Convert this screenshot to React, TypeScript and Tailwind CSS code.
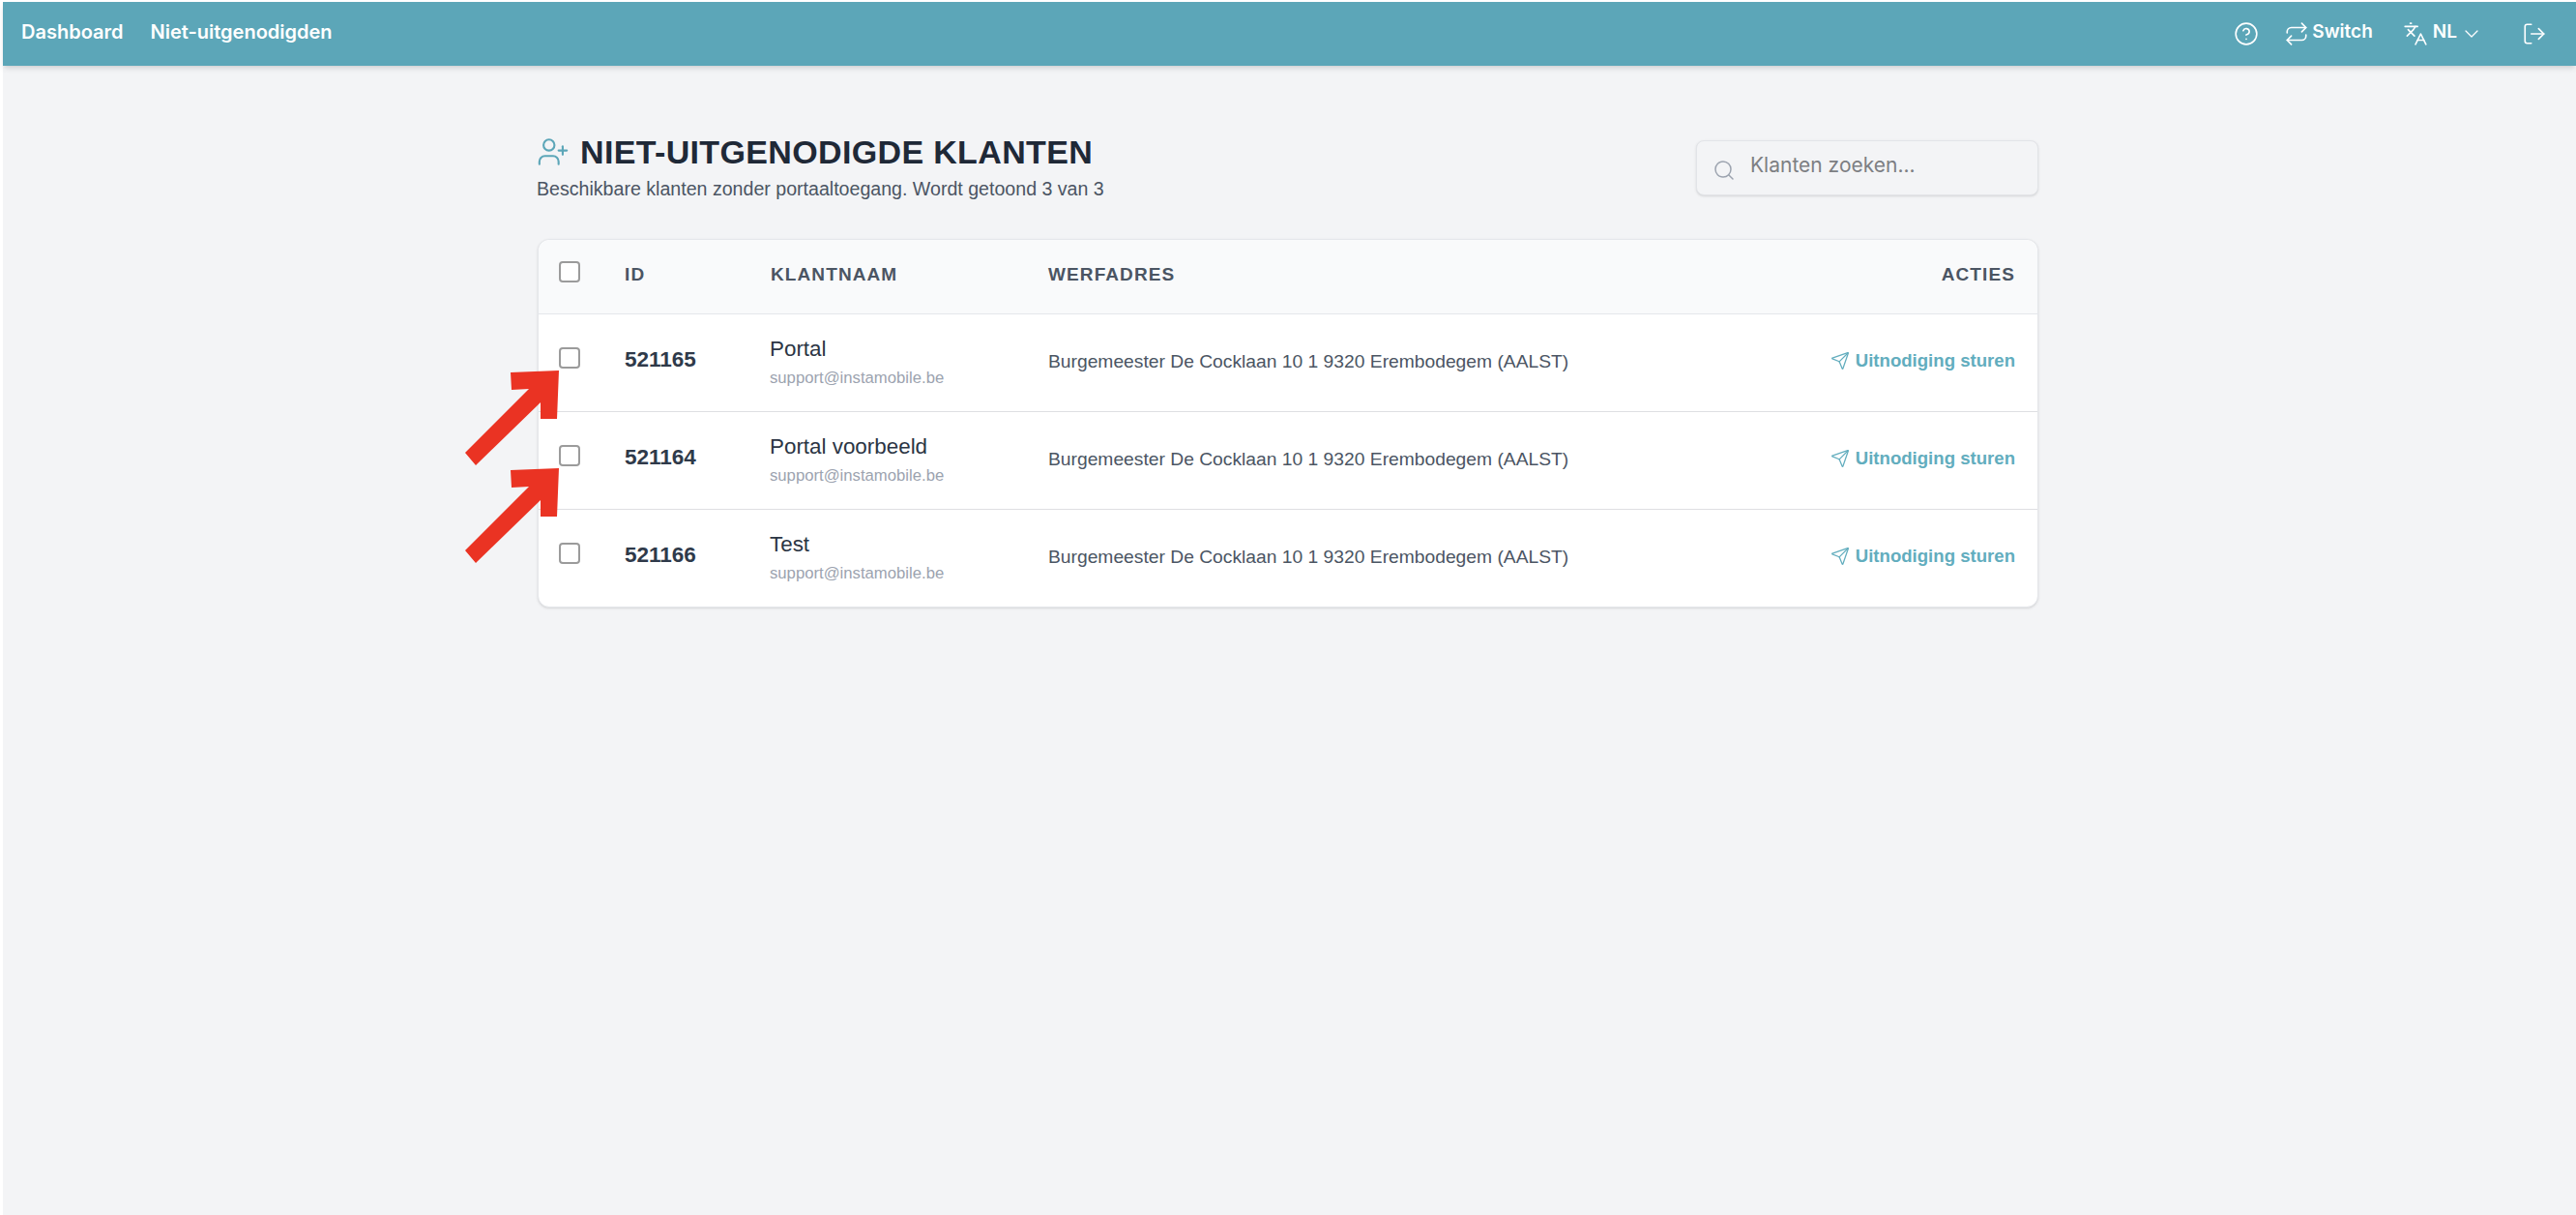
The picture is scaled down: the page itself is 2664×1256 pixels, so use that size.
import { ChevronDown, CircleHelp, Languages, LogOut, Repeat, Search, Send, UserPlus } from "lucide-react";

const klanten = [
  { id: "521165", naam: "Portal" },
  { id: "521164", naam: "Portal voorbeeld" },
  { id: "521166", naam: "Test" },
];

function Arrow() {
  return (
    <svg
      className="absolute left-[-81px] top-[58px] pointer-events-none"
      width="104"
      height="100"
      viewBox="0 0 104 100"
    >
      <path
        d="M52 2 L102 0 L100 50 L83 50 L83 33 L16 98 L5 85 L71 19 L53 20 Z"
        fill="#ea3323"
      />
    </svg>
  );
}

export default function App() {
  return (
    <div className="min-h-screen bg-white pl-[3px] pt-[2px] font-['Liberation_Sans',Arial,sans-serif]">
      <div className="min-h-[1254px] bg-[#f3f4f6]">
        {/* Navbar */}
        <nav className="h-[66px] bg-[#5ca6b8] shadow-md flex items-center justify-between pl-[19px] pr-[30px] text-white font-['Inter',sans-serif]">
          <div className="flex items-center gap-[28px] text-[20px] font-semibold -mt-[4px]">
            <span>Dashboard</span>
            <span>Niet-uitgenodigden</span>
          </div>
          <div className="flex items-center text-[19px] font-semibold">
            <CircleHelp size={26} strokeWidth={1.5} />
            <span className="flex items-center gap-[3px] ml-[26px]">
              <Repeat size={26} strokeWidth={1.5} />
              <span className="-mt-[4px]">Switch</span>
            </span>
            <span className="flex items-center gap-[5px] ml-[31px]">
              <Languages size={26} strokeWidth={1.5} />
              <span className="-mt-[4px]">NL</span>
              <ChevronDown size={24} strokeWidth={1.25} className="-ml-[2px]" />
            </span>
            <LogOut size={26} strokeWidth={1.5} className="ml-[40px]" />
          </div>
        </nav>

        <main className="w-[1552px] ml-[553px] pt-[70px]">
          <div className="flex items-start justify-between h-[109px]">
            <div className="-ml-[1px]">
              <h1 className="flex items-center gap-[11px] text-[34px] leading-[40px] font-bold text-[#1f2937] tracking-[0.35px] -mt-[1px]">
                <UserPlus size={34} strokeWidth={1.5} className="text-[#5ca6b8]" />
                NIET-UITGENODIGDE KLANTEN
              </h1>
              <p className="mt-[6px] text-[19.6px] leading-[24px] text-[#4b5563]">
                Beschikbare klanten zonder portaaltoegang. Wordt getoond 3 van 3
              </p>
            </div>
            <div className="relative w-[354px] h-[57px] mt-[7px] bg-[#f3f4f6] border border-[#e2e4e8] rounded-lg shadow flex items-center pl-[55px]">
              <Search size={24} strokeWidth={1.5} className="absolute left-[16px] top-[18px] text-[#9ca3af]" />
              <span className="text-[21px] text-[#7d7f83] font-['Inter',sans-serif] -mt-[6px]">Klanten zoeken...</span>
            </div>
          </div>

          <div className="relative bg-white rounded-xl shadow border border-[#e5e7eb]">
            <div className="flex items-center h-[77px] bg-[#f9fafb] rounded-t-xl border-b border-[#e5e7eb] text-[19px] font-bold tracking-[1.1px] text-[#4b5563]">
              <span className="w-[22px] h-[22px] ml-[21px] -mt-[10px] border-2 border-[#9b9b9b] rounded-[4px] bg-white" />
              <span className="ml-[46px] w-[151px] -mt-[4px]">ID</span>
              <span className="w-[287px] -mt-[4px]">KLANTNAAM</span>
              <span className="flex-1 -mt-[4px]">WERFADRES</span>
              <span className="mr-[23px] -mt-[4px]">ACTIES</span>
            </div>
            {klanten.map((k, i) => (
              <div
                key={k.id}
                className={`relative flex items-center ${i < 2 ? "h-[101px] border-b border-[#dedfe2]" : "h-[100px]"}`}
              >
                <span className="w-[22px] h-[22px] ml-[21px] -mt-[10px] border-2 border-[#9b9b9b] rounded-[4px] bg-white" />
                <span className="ml-[46px] w-[151px] -mt-[6px] text-[22.5px] font-bold text-[#2f3a4a]">{k.id}</span>
                <div className="w-[287px] -ml-[1px] mr-[1px]">
                  <div className="text-[22.4px] leading-[28px] -mt-[2px] text-[#2b3544]">{k.naam}</div>
                  <div className="text-[16.7px] leading-[22px] mt-[5px] text-[#9ca3af]">support@instamobile.be</div>
                </div>
                <span className="flex-1 text-[19.25px] text-[#4b5563] -mt-[1px]">
                  Burgemeester De Cocklaan 10 1 9320 Erembodegem (AALST)
                </span>
                <span className="mr-[23px] flex items-center gap-[6px] text-[18.6px] font-bold text-[#62adbe] -mt-[4px]">
                  <Send size={20} strokeWidth={1.5} />
                  Uitnodiging sturen
                </span>
                {i < 2 && <Arrow />}
              </div>
            ))}
          </div>
        </main>
      </div>
    </div>
  );
}
